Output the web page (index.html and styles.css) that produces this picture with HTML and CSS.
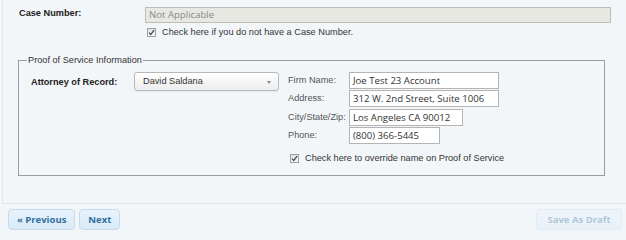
FILE: index.html
```html
<!DOCTYPE html>
<html>
<head>
<meta charset="utf-8">
<link rel="stylesheet" href="styles.css">
</head>
<body>
<div class="page">
  <div class="panel">
    <div class="case-row">
      <div class="lbl-bold case-lbl">Case Number:</div>
      <div class="case-field">
        <div class="input disabled">Not Applicable</div>
        <div class="check case-check"><span class="cb"><svg viewBox="0 0 8 8" width="8" height="8"><path d="M1.2 4.2 L3.2 6.3 L6.9 1.4" fill="none" stroke="#444" stroke-width="1.4"/></svg></span>Check here if you do not have a Case Number.</div>
      </div>
    </div>
    <fieldset class="pos">
      <legend>Proof of Service Information</legend>
      <div class="pos-grid">
        <div class="lbl-bold att-lbl">Attorney of Record:</div>
        <div class="select">David Saldana<span class="arrow"></span></div>
        <div class="firm">
          <div class="firm-lbl">Firm Name:</div><div class="input w150">Joe Test 23 Account</div>
          <div class="firm-lbl">Address:</div><div class="input w150">312 W. 2nd Street, Suite 1006</div>
          <div class="firm-lbl">City/State/Zip:</div><div class="input w114">Los Angeles CA 90012</div>
          <div class="firm-lbl">Phone:</div><div class="input w91">(800) 366-5445</div>
        </div>
      </div>
      <div class="check override"><span class="cb"><svg viewBox="0 0 8 8" width="8" height="8"><path d="M1.2 4.2 L3.2 6.3 L6.9 1.4" fill="none" stroke="#444" stroke-width="1.4"/></svg></span>Check here to override name on Proof of Service</div>
    </fieldset>
  </div>
  <div class="actions">
    <div class="nav">
      <button class="btn">« Previous</button>
      <button class="btn">Next</button>
    </div>
    <button class="btn disabled-btn">Save As Draft</button>
  </div>
</div>
</body>
</html>
```
FILE: styles.css
```css
* { box-sizing: border-box; }
html, body { margin: 0; padding: 0; }
body {
  background: #f3f6f9;
  font-family: "Liberation Sans", Arial, sans-serif;
  font-size: 9.2px;
  line-height: 11px;
  color: #333;
  width: 626px;
  height: 240px;
  overflow: hidden;
}
.page { display: flex; flex-direction: column; }
.panel {
  margin-left: 2px;
  height: 204px;
  border-left: 1px solid #e1e6ec;
  border-bottom: 1px solid #dde3e9;
  padding: 7px 0 0 16px;
}
.case-row { display: flex; }
.lbl-bold { font-weight: bold; color: #222; }
.case-lbl { width: 126px; padding-top: 1px; }
.case-field { display: flex; flex-direction: column; }
.input {
  height: 17px;
  border: 1px solid #b4b4b4;
  background: #fff;
  font-family: "Open Sans", sans-serif;
  font-size: 9.6px;
  line-height: 15px;
  padding: 0 3px;
  color: #333;
  white-space: nowrap;
}
.input.disabled {
  width: 466px;
  height: 16px;
  line-height: 14px;
  background: #e8e8e2;
  border-color: #bdbdb8;
  color: #8a8a8a;
}
.check { display: flex; align-items: center; color: #333; }
.case-check { margin-top: 4px; padding-left: 2px; }
.cb {
  width: 9px; height: 9px;
  border: 1px solid #a0a0a0;
  background: linear-gradient(#e2e2e2, #f8f8f8);
  margin-right: 6px;
  display: flex; align-items: center; justify-content: center;
}
.cb svg { display: block; width: 7px; height: 7px; }
.pos {
  margin: 17px 0 0 -1px;
  width: 587px;
  height: 121px;
  border: 1px solid #9c9c9c;
  padding: 6px 0 0 12px;
}
.pos legend {
  padding: 0 1px;
  margin-left: -4px;
  color: #333;
  line-height: 11px;
}
.pos-grid { display: flex; align-items: flex-start; }
.att-lbl { width: 103px; padding-top: 5px; }
.select {
  width: 145px;
  height: 19px;
  border: 1px solid #b8b8b8;
  border-radius: 3px;
  background: linear-gradient(#ffffff, #ececec);
  padding: 0 8px;
  line-height: 17px;
  position: relative;
  color: #333;
  box-shadow: 0 1px 1px rgba(0,0,0,0.05);
}
.arrow {
  position: absolute;
  right: 7px; top: 8px;
  width: 0; height: 0;
  border-left: 2.5px solid transparent;
  border-right: 2.5px solid transparent;
  border-top: 3px solid #888;
}
.firm {
  margin-left: 9px;
  display: grid;
  grid-template-columns: 61px auto;
  grid-auto-rows: 17px;
  row-gap: 1.4px;
  align-items: center;
  justify-items: start;
}
.firm-lbl { color: #555; }
.w150 { width: 150px; }
.w114 { width: 114px; }
.w91 { width: 91px; }
.override { margin: 9px 0 0 259px; }
.actions {
  display: flex;
  justify-content: space-between;
  padding: 5px 4px 0 8px;
}
.nav { display: flex; gap: 4px; }
.btn {
  height: 21px;
  border: 1px solid #c5dbec;
  border-radius: 4px;
  background: linear-gradient(#e8f3fc, #d8eaf9);
  color: #2e6e9e;
  font-family: "Open Sans", sans-serif;
  font-weight: bold;
  font-size: 9.5px;
  padding: 0 8px;
  line-height: 19px;
}
.disabled-btn { opacity: 0.35; width: 86px; }
```
